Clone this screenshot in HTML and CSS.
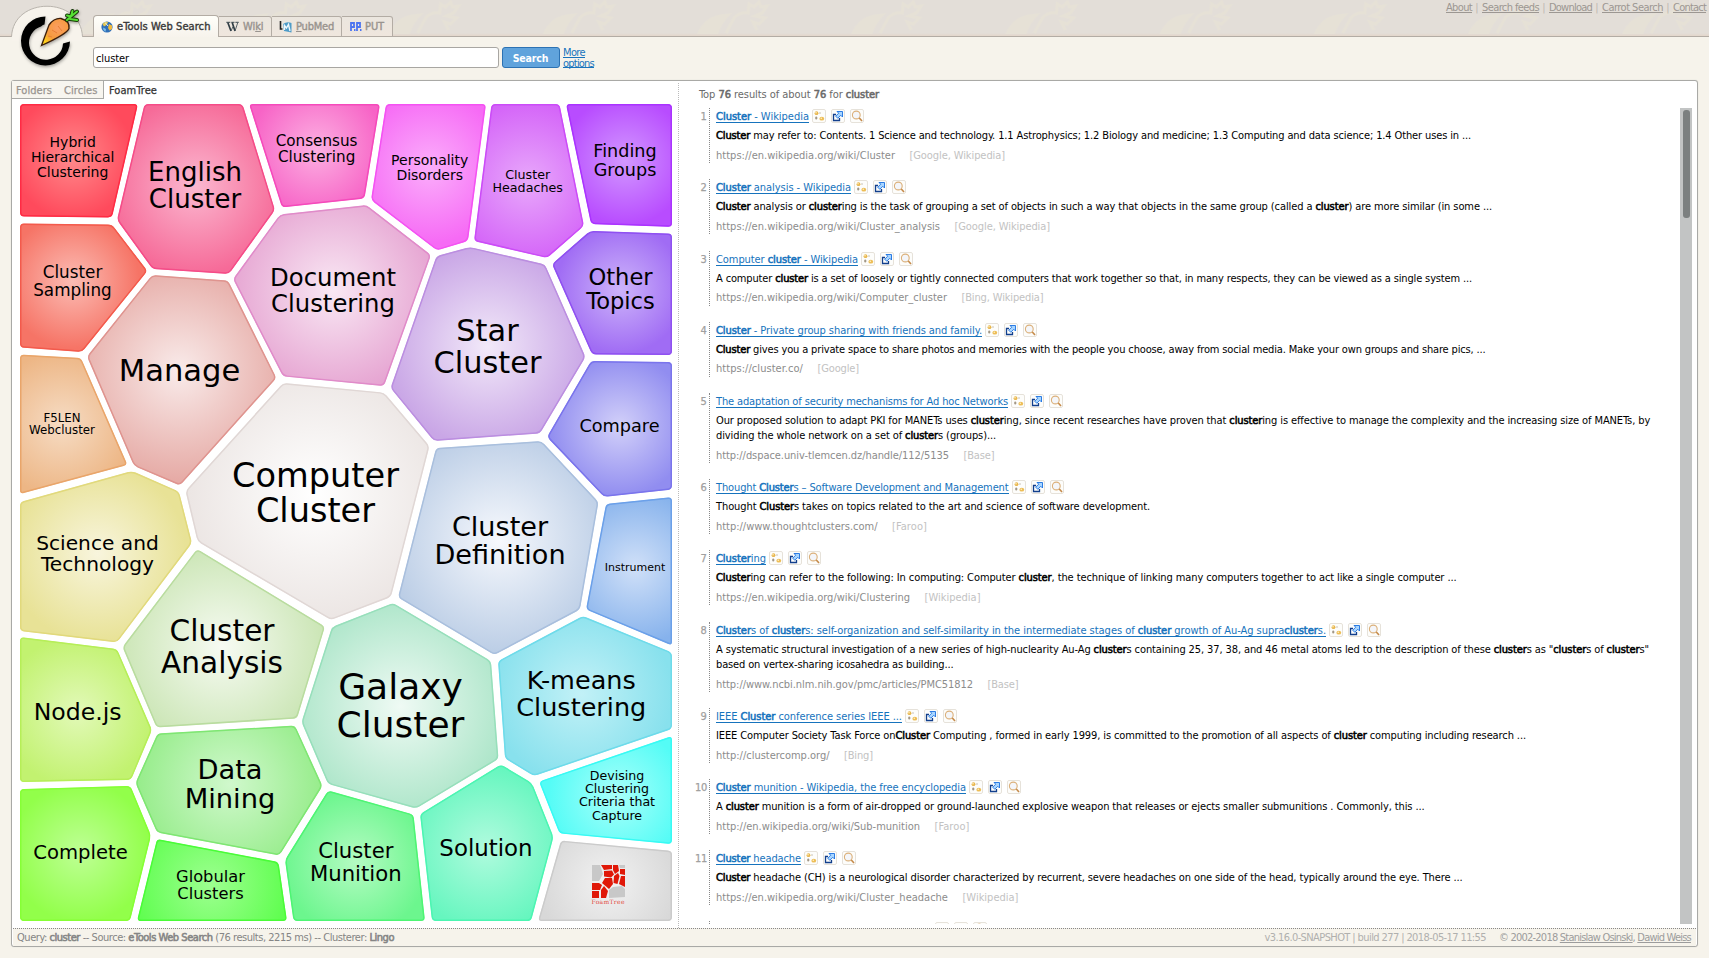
FILE: index.html
```html
<!DOCTYPE html>
<html lang="en">
<head>
<meta charset="utf-8">
<title>cluster - Carrot2</title>
<link rel="stylesheet" href="styles.css">
</head>
<body>
<header class="header">
  <svg class="header-pattern" width="1709" height="34">
    <defs>
      <pattern id="carrots" x="-74" y="0" width="154.2" height="34" patternUnits="userSpaceOnUse">
        <path d="M0 34 Q8 15 28 14 L35 13 Q25 22 21 34Z" fill="#e6e1d6"/>
        <path d="M29 33 L37 18 Q42 12 51 13 L52 4 L57 7 L62 2 L64 7 L70 6 L65 13 L58 16 L68 18 L62 24 L56 22 L60 30" fill="none" stroke="#e6e1d6" stroke-width="3"/>
      </pattern>
    </defs>
    <rect width="1709" height="34" fill="url(#carrots)"/>
  </svg>
  <nav class="tabs">
    <a class="tab tab-active"><svg class="tab-icon" width="12" height="12" viewBox="0 0 12 12"><circle cx="6" cy="6" r="5.6" fill="#2f6fb8"/><path d="M1.5 3 Q4 0 7 1.2 L5.5 4 L3 5.5Z" fill="#e9c94e"/><path d="M8 3 L11 4.5 L11 8 L8.5 9.5 L7 7Z" fill="#f0b93c"/><path d="M2 6.5 L5 8 L4.5 10.8 L2.5 9Z" fill="#7fc0e8"/><path d="M4 1.5 L7 5" stroke="#d5ecfa"/></svg><span data-w="93.5">eTools Web Search</span></a>
    <a class="tab tab-wiki"><svg class="tab-icon" width="13" height="12" viewBox="0 0 13 12"><path d="M.3 1.3h4M5.3 1.3h3.2M9.4 1.3h3.3" stroke="#3c4a50"/><path d="M1.8 1.5 L5 10 M6.2 1.5 L9 10" stroke="#2f3d44" stroke-width="1.7"/><path d="M5 10 L7 5.5 M9 10 L11.8 1.5" stroke="#4a565c" stroke-width=".9"/></svg><span data-w="20.5">Wi<u>k</u>i</span></a>
    <a class="tab tab-pubmed"><svg class="tab-icon" width="13" height="12" viewBox="0 0 13 12"><path d="M1.5 0v8h2" stroke="#222" stroke-width="1.6" fill="none"/><path d="M4 3 Q8 0 12.500 2 V11.500 L5 10Z" fill="#4f9cc8"/><path d="M5.500 9 V4.500 L7.500 7 L9.500 3.500 L11 10" fill="none" stroke="#eef7fc" stroke-width="1.4"/></svg><span data-w="38"><u>P</u>ubMed</span></a>
    <a class="tab tab-put"><svg class="tab-icon" width="12" height="9" viewBox="0 0 12 9"><path d="M1 9V1h3v4H1M7 9V1h3v4H7" fill="none" stroke="#4c74f0" stroke-width="1.8"/><path d="M4 7h1.500v2H4zM10 7h1.500v2H10z" fill="#4c74f0"/></svg><span data-w="19">PUT</span></a>
  </nav>
  <nav class="toplinks"><a data-w="26">About</a><i>|</i><a data-w="57">Search feeds</a><i>|</i><a data-w="43">Download</a><i>|</i><a data-w="61">Carrot Search</a><i>|</i><a data-w="33">Contact</a></nav>
  <svg class="logo" width="80" height="74" viewBox="0 0 80 74">
    <defs>
      <radialGradient id="carrotFill" cx=".6" cy=".35" r=".7"><stop offset="0" stop-color="#fb9d63"/><stop offset=".6" stop-color="#f59a3c"/><stop offset="1" stop-color="#ffd21e"/></radialGradient>
      <filter id="soft" x="-20%" y="-20%" width="140%" height="150%"><feDropShadow dx=".5" dy="1.500" stdDeviation="1.500" flood-opacity=".35"/></filter>
    </defs>
    <path d="M4.500 35 C6 -6 74 -6 75.500 35" fill="#f7f3ec" stroke="#b9b4ad"/>
    <path d="M5 34h70v5H5z" fill="#f7f3ec"/>
    <g filter="url(#soft)">
      <path d="M38.500 14.500 A24.500 24.500 0 1 0 63 39.500 L56 41.500 A17 17 0 1 1 34 24.500 Q36 22.500 37.500 22.500Z" fill="#000"/>
      <path d="M34.500 43.500 L42 23 Q47 16 54 16.500 Q63 19 62 26.500 Q60 32 34.500 43.500Z" fill="url(#carrotFill)" stroke="#3a1d08" stroke-width="1.300"/>
      <path d="M41 34l4 1M45 28l5 3M51 24l4 5" stroke="#e87f35" fill="none"/>
      <path d="M60 18 L64 14.500 L60 13.500 M64 14.500 L65.500 9 M64 14.500 L70 9.500 M63 17 L70 18" fill="none" stroke="#183a08" stroke-width="4" stroke-linecap="round"/>
      <path d="M60 18 L64 14.500 L60 13.500 M64 14.500 L65.500 9 M64 14.500 L70 9.500 M63 17 L70 18" fill="none" stroke="#57e234" stroke-width="2" stroke-linecap="round"/>
    </g>
  </svg>
</header>

<form class="search">
  <div class="search-input"><span data-w="33">cluster</span></div>
  <div class="search-button"><span data-w="35.5">Search</span></div>
  <div class="search-more"><a data-w="22">More</a><a data-w="31">options</a></div>
</form>

<main class="panel">
  <div class="content">
    <section class="clusters">
      <nav class="views">
        <div class="views-idle"><span data-w="36">Folders</span><span data-w="33.5">Circles</span></div>
        <div class="views-active"><span data-w="48">FoamTree</span></div>
      </nav>
      <svg class="foamtree" id="foamtree" viewBox="12 98 666 829" width="666" height="829"></svg>
    </section>
    <section class="documents">
      <div class="summary"><span data-w="180">Top <b>76</b> results of about <b>76</b> for <b>cluster</b></span></div>
      <div class="scroller">
        <div class="results" id="results"></div>
        <div class="scrollbar"><div class="scrollbar-thumb"></div></div>
      </div>
    </section>
  </div>
  <footer class="footer">
    <div class="status"><span data-w="377">Query: <b>cluster</b> -- Source: <b>eTools Web Search</b> (76 results, 2215 ms) -- Clusterer: <b>Lingo</b></span></div>
    <div class="credits"><span class="build" data-w="221.500">v3.16.0-SNAPSHOT | build 277 | 2018-05-17 11:55</span><span data-w="192">© 2002-2018 <u>Stanislaw Osinski</u>, <u>Dawid Weiss</u></span></div>
  </footer>
</main>
<script src="script.js"></script>
</body>
</html>
```
FILE: styles.css
```css
* { box-sizing: border-box; }
body {
  margin: 0; width: 1709px; height: 958px; overflow: hidden;
  display: flex; flex-direction: column;
  background: #f6f3eb; color: #000;
  font: 11px/14px "DejaVu Sans Condensed", "DejaVu Sans", sans-serif;
}
b { font-weight: normal; -webkit-text-stroke: .55px currentColor; }
[data-w] { display: inline-block; white-space: pre; }

.header {
  position: relative; flex: none; height: 37px; display: flex; justify-content: space-between;
  background: linear-gradient(#e3ded8 0, #e3ded8 33px, #e3d6cb 36px); border-bottom: 1px solid #b3aca4;
}
.header-pattern { position: absolute; left: 0; top: 0; }
.logo { position: absolute; left: 7px; top: 2px; }
.tabs { position: relative; display: flex; align-items: flex-end; margin-left: 93px; height: 37px; }
.tab {
  display: flex; align-items: center; height: 21px; color: #99948f;
  border: 1px solid #b3aca4; border-left: 0; border-radius: 0 3px 0 0;
  background: linear-gradient(#ebe6df, #efe6dd); -webkit-text-stroke: .4px currentColor;
}
.tab-icon { flex: none; margin-right: 4px; }
.tab-active {
  width: 126px; height: 22px; padding-left: 7px; color: #3a3a3a;
  border: 1px solid #b3aca4; border-bottom: 0; border-radius: 4px 4px 0 0; background: linear-gradient(#fffffa, #f7f3ec);
}
.tab-wiki { width: 53px; padding-left: 7px; }
.tab-pubmed { width: 70px; padding-left: 7px; }
.tab-put { width: 51px; padding-left: 8px; }
.tab-put .tab-icon { margin-right: 3px; }
.toplinks { position: relative; display: flex; margin-right: 3px; color: #9c9792; }
.toplinks a { height: 13px; line-height: 15px; border-bottom: 1px solid #9c9792; }
.toplinks i { width: 10px; text-align: center; font-style: normal; line-height: 15px; color: #bdb8b2; }

.search { flex: none; display: flex; height: 43px; padding: 10px 0 0 93px; }
.search-input {
  width: 406px; height: 21px; padding: 4px 2px; margin-right: 3px;
  background: #fff; border: 1px solid #a8a6a2; border-radius: 3px;
}
.search-button {
  width: 58px; height: 21px; margin-right: 3px; padding-right: 1px; text-align: center; line-height: 20px; color: #fff;
  background: #60a3dc; border: 1px solid #2c72b3; border-radius: 3px; font-weight: bold; font-size: 10.5px;
}
.search-more { display: flex; flex-direction: column; align-items: flex-start; color: #1673bd; }
.search-more a { height: 10px; line-height: 11px; border-bottom: 1px solid #1673bd; }
.search-more a:first-child { height: 11px; }

.panel {
  flex: none; width: 1687px; height: 867px; margin-left: 11px; display: flex; flex-direction: column;
  background: #fff; border: 1px solid #a9a9a6; border-radius: 3px; box-shadow: 0 0 1px #c9c6c0;
}
.content { display: flex; height: 849px; }
.clusters { width: 667px; border-right: 1px dotted #bbb; margin-top: 2px; }
.views { display: flex; height: 18px; margin-top: -2px; color: #99948f; }
.views-idle {
  display: flex; gap: 12px; width: 92px; padding: 3px 0 0 4px; background: #f7f5ef;
  border-right: 1px solid #a9a9a6; border-bottom: 1px solid #a9a9a6;
}
.views-active { padding: 3px 0 0 5px; color: #333; }
.views span { -webkit-text-stroke: .25px currentColor; }
.foamtree { display: block; height: 829px; margin-top: -1px; }
.foamtree-label { font-family: "DejaVu Sans", sans-serif; text-anchor: middle; }
.foamtree-brand { font-family: "DejaVu Serif", "Liberation Serif", serif; font-size: 6px; fill: #e2493c; }

.documents { flex: 1; padding: 6px 5px 0 14px; display: flex; flex-direction: column; }
.summary { height: 21px; padding-left: 6px; line-height: 15px; color: #6a6a6a; }
.scroller { display: flex; height: 816px; }
.results { flex: 1; overflow: hidden; padding-top: .4px; }
.scrollbar { width: 12px; padding: 2px 2px 0 3px; background: #c2c4c4; }
.scrollbar-thumb { height: 108px; background: #7c8080; border-radius: 3px; }
.result { display: flex; margin-bottom: 16.1px; }
.result-rank {
  display: flex; justify-content: flex-end; width: 14px; margin-right: 2px;
  color: #a0a0a0; line-height: 17px; -webkit-text-stroke: .25px currentColor;
}
.result-body { padding-left: 6px; border-left: 1px dotted #888; min-height: 55px; }
.result-head { display: flex; height: 16px; }
.result-title { height: 15px; line-height: 17px; color: #1673bd; border-bottom: 1px solid #1673bd; margin-right: 3px; }
.result-title-blank { width: 216px; border: 0; }
.result-tools { display: flex; gap: 5px; margin-top: 1px; }
.result-text { display: flex; flex-direction: column; align-items: flex-start; padding-top: 4px; }
.result-text span { height: 15.5px; line-height: 15px; }
.result-meta { display: flex; gap: 14.5px; height: 19.5px; line-height: 24px; }
.result-url { color: #8c8c8c; }
.result-source { color: #c2c2c2; }

.footer {
  flex: 1; display: flex; justify-content: space-between; margin: 0 1px; padding: 0 5px 0 4px;
  background: #f6f3eb; border-top: 1px dotted #888; color: #858585; line-height: 17px;
}
.credits { display: flex; gap: 13px; color: #9c9c9c; }
.build { color: #b0b0ae; }
```
FILE: script.js
```js
// Cells: polygon, centre colour, edge colour, border colour, font size, text centre x, [line, baseline]...
const cells = [
  ["20,104 138,104 112,217.5 20,216.5", "#ff8a8c", "#ff4a5c", "#ff2b44", 14, 72.7, [["Hybrid", 146.7], ["Hierarchical", 161.7], ["Clustering", 177]]],
  ["144.5,104 242.5,104 275,210 229,274 152.5,269 117,220", "#fbb8d0", "#f66a98", "#f54c88", 26, 195, [["English", 181], ["Cluster", 208.3]]],
  ["249,104 380,104 364.5,198.500 282,207.5", "#fcb0e2", "#f763c6", "#f54abb", 15.2, 316.6, [["Consensus", 146], ["Clustering", 162]]],
  ["386,104 486,104 468,241 437,250.5 371,200", "#fbaefb", "#f66af5", "#f452f2", 14, 429.7, [["Personality", 165], ["Disorders", 180]]],
  ["491.5,104 559.5,104 584,226 547,258 474,241", "#e8a8fb", "#d464f8", "#cb4cf7", 12.7, 527.7, [["Cluster", 179.3], ["Headaches", 192]]],
  ["566,104 672,104 672,227 591,224", "#d298ff", "#b84cff", "#aa33ff", 17.6, 625, [["Finding", 157.3], ["Groups", 176.3]]],
  ["20,223.5 112,224.5 147.5,271 82,352 20,347.5", "#fbbcb4", "#f67466", "#f35a4c", 16.8, 72.5, [["Cluster", 278], ["Sampling", 296]]],
  ["152,275 228,280.5 276.5,378 180,485.5 134,466 87,356.5", "#f9ebea", "#e6aba6", "#df948f", 30.6, 179.5, [["Manage", 380.5]]],
  ["280,214.5 366.500,205 431,255 384,386 283,376.500 233,279", "#f9e8f4", "#e6a5d2", "#e08bc9", 24.3, 333, [["Document", 285.7], ["Clustering", 311.7]]],
  ["470,247 545,264.5 585.5,357 540,433.500 434,441 390.5,388 436.5,256", "#f2e9f9", "#c9a6e6", "#bb8ee0", 30.4, 487.5, [["Star", 341], ["Cluster", 372.7]]],
  ["590,231 672,233.5 672,355 592,354.5 552,264", "#cdb4fa", "#a06cf4", "#8f50f1", 22.6, 620.5, [["Other", 284.7], ["Topics", 309]]],
  ["591,361 672,362 672,489.5 604,497 547,437", "#d2d0f9", "#918df0", "#7a74ec", 17.7, 619.5, [["Compare", 431.7]]],
  ["20,354.5 81,358 127.5,465 20,494", "#f6dcc4", "#edb685", "#e9a56a", 11.8, 62, [["F5LEN", 422], ["Webcluster", 434]]],
  ["283,383 384,392.5 429.5,446 391,597 331,620 197.5,541.5 185.5,491", "#ffffff", "#ece6e4", "#e0d7d5", 33.6, 315.5, [["Computer", 486.7], ["Cluster", 521.7]]],
  ["436,448 541.500,441 598.5,502 580,609.5 494.5,655 398,597.5", "#f7f9fd", "#bccee6", "#a9bfdd", 27.1, 500, [["Cluster", 535.7], ["Definition", 564]]],
  ["606,504 672,497 672,645.5 586,609.5", "#d0e0f8", "#86b2ec", "#6ba0e9", 11, 635, [["Instrument", 571]]],
  ["20,502 132,471 179,491.5 192,543 117,642.5 20,631", "#f8f5dd", "#e8e296", "#e1d97c", 20.2, 97.5, [["Science and", 550], ["Technology", 571]]],
  ["197,549 325,626.5 297,718.500 156.5,727.5 122.5,647", "#f7fbf3", "#cae5b4", "#b9dc9f", 29.6, 222, [["Cluster", 641.3], ["Analysis", 672.7]]],
  ["332,627 393,603 491,661 498.5,759 416,808.5 328,784 301.5,722", "#effaf4", "#aee6ca", "#97dfbb", 36, 400.5, [["Galaxy", 699.3], ["Cluster", 737.3]]],
  ["583,616 672,652.5 672,729 534,776 505,758.5 498,661", "#c2f1f7", "#88e1ed", "#6edbea", 25.5, 581.3, [["K-means", 688.7], ["Clustering", 716]]],
  ["20,637 117,649 152,730 131,780 20,782", "#e2f9b8", "#c2f270", "#b6ee58", 23.6, 77.7, [["Node.js", 719.7]]],
  ["157.5,733.5 295,725.5 322.5,786 279.5,855.5 157,832.5 135.5,783", "#d0f8cc", "#94ec88", "#7fe673", 27.3, 230, [["Data", 778.7], ["Mining", 808]]],
  ["20,789 130.5,786 151,835.5 130,921 20,921", "#beff95", "#92ff4a", "#86ff36", 19.6, 80.5, [["Complete", 858.7]]],
  ["157,839 278.5,862 287,921 137,921", "#9dff90", "#60fe50", "#4afc38", 16.3, 210.5, [["Globular", 882], ["Clusters", 898.7]]],
  ["328,790.5 413.500,814.5 425,921 293.5,921 285,860", "#b4fbc2", "#6cf68e", "#4ef574", 21.2, 355.8, [["Cluster", 858], ["Munition", 880.7]]],
  ["501,764.5 532,783 553.5,837 531,921 432,921 420,814", "#b0fbde", "#66f6bf", "#4cf5b2", 22.9, 486, [["Solution", 855.7]]],
  ["539,781.5 672,736 672,844 559.5,833.5", "#a8fffa", "#54fcf6", "#38faf4", 12.6, 617, [["Devising", 780], ["Clustering", 793], ["Criteria that", 806], ["Capture", 820]]],
  ["561,840.5 672,851 672,921 538,921", "#f2f2f2", "#d8d8d8", "#cbcbcb", 0, 0, []]
];

// Closed path through the points with each corner softened by radius r.
function roundedPath(points, r) {
  const n = points.length;
  let d = "";
  points.forEach((p, i) => {
    const along = q => {
      const len = Math.hypot(q[0] - p[0], q[1] - p[1]);
      return [p[0] + (q[0] - p[0]) * r / len, p[1] + (q[1] - p[1]) * r / len];
    };
    d += (i ? "L" : "M") + along(points[(i + n - 1) % n]) + "Q" + p + " " + along(points[(i + 1) % n]);
  });
  return d + "Z";
}

let defs = "", shapes = "";
cells.forEach(([poly, inner, outer, edge, size, cx, lines], i) => {
  const pts = poly.split(" ").map(p => p.split(",").map(Number));
  const d = roundedPath(pts, 4);
  const xs = pts.map(p => p[0]), ys = pts.map(p => p[1]);
  const mx = lines.length ? cx : 608;
  const my = lines.length ? (lines[0][1] + lines[lines.length - 1][1]) / 2 - size / 3 : 883;
  const r = Math.max(Math.max(...xs) - Math.min(...xs), Math.max(...ys) - Math.min(...ys)) * .52;
  defs += `<radialGradient id="g${i}" gradientUnits="userSpaceOnUse" cx="${mx}" cy="${my}" r="${r}"><stop offset="0" stop-color="${inner}"/><stop offset="1" stop-color="${outer}"/></radialGradient><clipPath id="c${i}"><path d="${d}"/></clipPath>`;
  shapes += `<path d="${d}" fill="url(#g${i})" stroke="${edge}" stroke-width="3" clip-path="url(#c${i})"/>`;
  lines.forEach(([t, y]) => {
    shapes += `<text class="foamtree-label" x="${cx}" y="${y}" font-size="${size}">${t}</text>`;
  });
});
const brand = `<g transform="translate(591 864)"><path d="M1 1h8l3 9-4 7H1zM22 23l9-1 3 3v8l-16 1v-8z" fill="#c8c8c8"/><path d="M28 1h6v3h-5z" fill="#c8c8c8"/>
<g fill="#e01808"><path d="M10 1h11v4l-8 1z"/><path d="M22 1h5l1 6-4 3-2-4z"/><path d="M13 7l8-.5 2 4-3 3-7-1z"/><path d="M29 5h5v6l-5-1z"/><path d="M23 12l4-3 1.500 3-2 8-4-1z"/><path d="M30 12h4v11l-4-2-2-1z"/><path d="M14 14h7l1 6-4 5-7-6z"/><path d="M1 19h7l3 2-2 5H1z"/><path d="M1 27h7v7H1z"/><path d="M10 26l3-4 4 5-2 7h-5z"/></g>
<text class="foamtree-brand" x="0.500" y="39.500" textLength="33">FoamTree</text></g>`;
document.getElementById("foamtree").innerHTML = `<defs>${defs}</defs>${shapes}${brand}`;

// Results: [title, width], [[text line, width]...], [url, width], [source, width]; *x* marks query terms.
const results = [
  [["*Cluster* - Wikipedia", 93], [["*Cluster* may refer to: Contents. 1 Science and technology. 1.1 Astrophysics; 1.2 Biology and medicine; 1.3 Computing and data science; 1.4 Other uses in ...", 755]], ["https://en.wikipedia.org/wiki/Cluster", 179], ["[Google, Wikipedia]", 95.5]],
  [["*Cluster* analysis - Wikipedia", 135], [["*Cluster* analysis or *cluster*ing is the task of grouping a set of objects in such a way that objects in the same group (called a *cluster*) are more similar (in some ...", 776]], ["https://en.wikipedia.org/wiki/Cluster_analysis", 224], ["[Google, Wikipedia]", 95.5]],
  [["Computer *cluster* - Wikipedia", 142], [["A computer *cluster* is a set of loosely or tightly connected computers that work together so that, in many respects, they can be viewed as a single system ...", 756]], ["https://en.wikipedia.org/wiki/Computer_cluster", 231], ["[Bing, Wikipedia]", 82]],
  [["*Cluster* - Private group sharing with friends and family.", 266], [["*Cluster* gives you a private space to share photos and memories with the people you choose, away from social media. Make your own groups and share pics, ...", 769.5]], ["https://cluster.co/", 87], ["[Google]", 41.5]],
  [["The adaptation of security mechanisms for Ad hoc Networks", 292], [["Our proposed solution to adapt PKI for MANETs uses *cluster*ing, since recent researches have proven that *cluster*ing is effective to manage the complexity and the increasing size of MANETs, by", 934], ["dividing the whole network on a set of *cluster*s (groups)...", 280]], ["http://dspace.univ-tlemcen.dz/handle/112/5135", 233], ["[Base]", 31]],
  [["Thought *Cluster*s – Software Development and Management", 292.5], [["Thought *Cluster*s takes on topics related to the art and science of software development.", 434]], ["http://www.thoughtclusters.com/", 161.5], ["[Faroo]", 35]],
  [["*Cluster*ing", 50], [["*Cluster*ing can refer to the following: In computing: Computer *cluster*, the technique of linking many computers together to act like a single computer ...", 740.5]], ["https://en.wikipedia.org/wiki/Clustering", 194], ["[Wikipedia]", 56]],
  [["*Cluster*s of *cluster*s: self-organization and self-similarity in the intermediate stages of *cluster* growth of Au-Ag supra*cluster*s.", 610], [["A systematic structural investigation of a new series of high-nuclearity Au-Ag *cluster*s containing 25, 37, 38, and 46 metal atoms led to the description of these *cluster*s as \"*cluster*s of *cluster*s\"", 933], ["based on vertex-sharing icosahedra as building...", 237.5]], ["http://www.ncbi.nlm.nih.gov/pmc/articles/PMC51812", 257], ["[Base]", 31]],
  [["IEEE *Cluster* conference series IEEE ...", 186], [["IEEE Computer Society Task Force on*Cluster* Computing , formed in early 1999, is committed to the promotion of all aspects of *cluster* computing including research ...", 810]], ["http://clustercomp.org/", 113.5], ["[Bing]", 29]],
  [["*Cluster* munition - Wikipedia, the free encyclopedia", 250], [["A *cluster* munition is a form of air-dropped or ground-launched explosive weapon that releases or ejects smaller submunitions . Commonly, this ...", 708.5]], ["http://en.wikipedia.org/wiki/Sub-munition", 204], ["[Faroo]", 35]],
  [["*Cluster* headache", 85], [["*Cluster* headache (CH) is a neurological disorder characterized by recurrent, severe headaches on one side of the head, typically around the eye. There ...", 746.5]], ["https://en.wikipedia.org/wiki/Cluster_headache", 232], ["[Wikipedia]", 56]],
  [["", 216], [["", 10]], ["", 10], ["", 10]]
];
const box = '<rect x=".5" y=".5" width="13" height="13" rx="1.500" fill="#fdfdfb" stroke="#e6e2da"/>';
const tools = `<div class="result-tools">
<svg width="14" height="14">${box}<circle cx="4.500" cy="4.200" r="1.900" fill="#e8b64c"/><path d="M7.500 4h1M4.200 7.500v3M3 9h2.500" stroke="#8b7d66" stroke-width=".9"/><ellipse cx="9.800" cy="9.700" rx="2.400" ry="1.900" fill="#edbd55"/><circle cx="4" cy="3.800" r=".8" fill="#fff0c4"/><circle cx="9.300" cy="9.200" r=".8" fill="#fff0c4"/></svg>
<svg width="14" height="14">${box}<path d="M5 5.500H2.500V11.500H8.500V9" fill="none" stroke="#123f8c" stroke-width="1.300"/><path d="M6 2.500h5.500v5.500l-1.700-1.700-3 3-2.100-2.100 3-3z" fill="#a9d6ff" stroke="#1a6fe0" stroke-width=".9"/></svg>
<svg width="14" height="14">${box}<circle cx="6.300" cy="6" r="3.900" fill="#f4f6fa" stroke="#dbb07a" stroke-width="1.100"/><path d="M9.300 9l2.700 3" stroke="#c58a4a" stroke-width="1.600"/></svg></div>`;
const mark = s => s.replace(/\*([^*]+)\*/g, "<b>$1</b>");
document.getElementById("results").innerHTML = results.map(([title, text, url, source], i) => `
<article class="result"><div class="result-rank">${i < 11 ? `<span data-w="${i < 9 ? 6.5 : 12}">${i + 1}</span>` : ""}</div><div class="result-body">
<div class="result-head"><a class="result-title${title[0] ? "" : " result-title-blank"}" data-w="${title[1]}">${mark(title[0])}</a>${tools}</div>
<div class="result-text">${text.map(t => `<span data-w="${t[1]}">${mark(t[0])}</span>`).join("")}</div>
<div class="result-meta"><span class="result-url" data-w="${url[1]}">${url[0]}</span><span class="result-source" data-w="${source[1]}">${source[0]}</span></div>
</div></article>`).join("");

document.querySelectorAll("[data-w]").forEach(el => {
  const n = el.textContent.length;
  if (!n) return;
  const gap = (parseFloat(el.dataset.w) - el.getBoundingClientRect().width) / n;
  el.style.letterSpacing = gap.toFixed(3) + "px";
});
```
